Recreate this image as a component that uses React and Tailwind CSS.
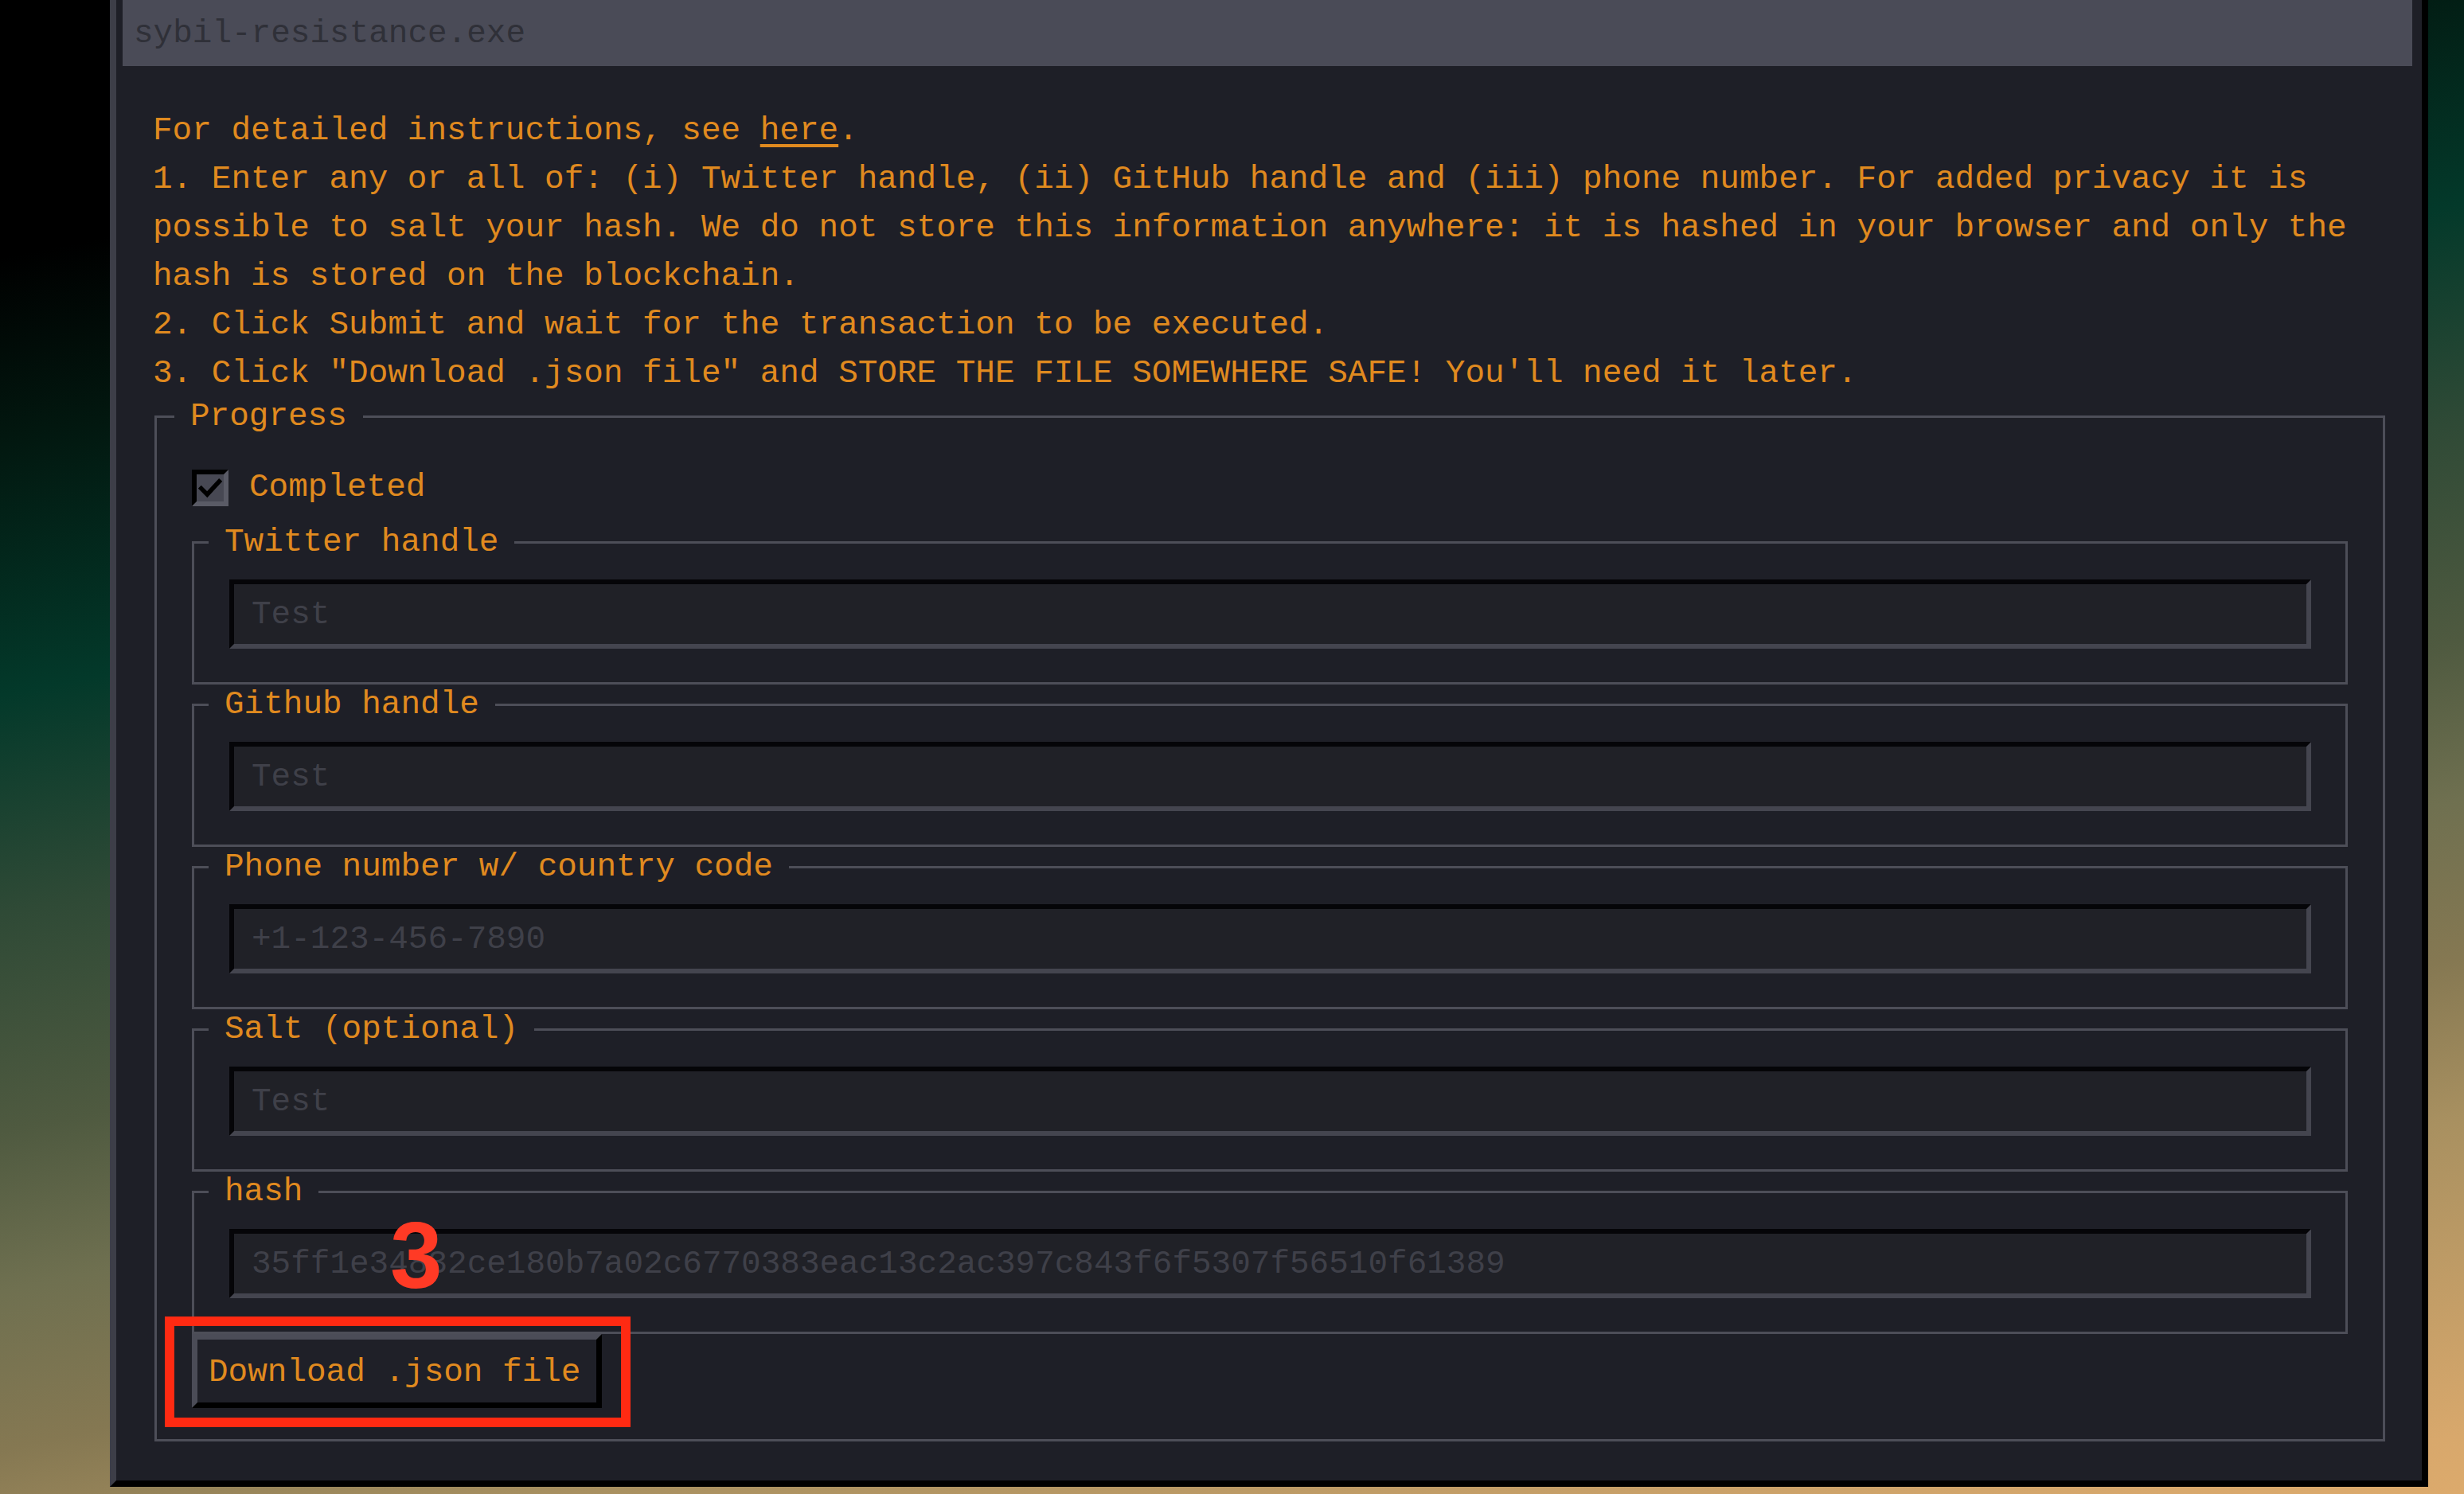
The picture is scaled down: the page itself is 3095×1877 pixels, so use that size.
import React from "react";

const fields = [
  { label: "Twitter handle", value: "Test" },
  { label: "Github handle", value: "Test" },
  { label: "Phone number w/ country code", value: "+1-123-456-7890" },
  { label: "Salt (optional)", value: "Test" },
  {
    label: "hash",
    value: "35ff1e34832ce180b7a02c6770383eac13c2ac397c843f6f5307f56510f61389",
    annotate: true,
  },
];

function Field({ label, value, annotate }) {
  return (
    <fieldset className="border-[3px] border-[#4d4e58] pl-[44px] pr-[43px] pt-[27px] pb-[42px]">
      <legend className="-ml-[26px] px-[20px] leading-[40px]">{label}</legend>
      <div className="relative">
        <input
          readOnly
          defaultValue={value}
          className="block h-[87px] w-full border-[6px] border-t-[#050508] border-l-[#050508] border-b-[#44454f] border-r-[#44454f] bg-[#202127] pl-[22px] text-[#3f4049] outline-none"
        />
        {annotate && (
          <span className="pointer-events-none absolute left-[202px] top-[-26px] font-['Liberation_Sans',Arial,sans-serif] text-[118px] font-bold leading-none text-[#ff3a25]">
            3
          </span>
        )}
      </div>
    </fieldset>
  );
}

export default function App() {
  return (
    <div className="h-[1877px] w-full overflow-hidden bg-[linear-gradient(168.7deg,#000_0%,#000_13%,#02170f_22%,#03392a_35%,#2f4a36_46%,#4f5a40_57%,#6f7050_65%,#857852_73%,#a89060_81%,#d8a86c_97%,#dcaa6c_100%)] pl-[138px] pr-[45px] pb-[9px] font-['Liberation_Mono',monospace] text-[41px]">
      <div className="flex h-full flex-col border-b-[8px] border-l-[8px] border-r-[8px] border-b-black border-l-[#3d3e48] border-r-black bg-[#1e1f27]">
        <div className="ml-[8px] mr-[12px] h-[83px] shrink-0 bg-[#4a4b57] pl-[14px] leading-[85px] text-[#2f3038]">
          sybil-resistance.exe
        </div>
        <div className="pl-[48px] pr-[46px] text-[#e08a1f]">
          <div className="-ml-[2px] mt-[51px] leading-[61px]">
            <p>
              For detailed instructions, see <a className="underline underline-offset-[6px]">here</a>.
            </p>
            <p>
              1. Enter any or all of: (i) Twitter handle, (ii) GitHub handle and (iii) phone number. For added
              privacy it is possible to salt your hash. We do not store this information anywhere: it is hashed in
              your browser and only the hash is stored on the blockchain.
            </p>
            <p>2. Click Submit and wait for the transaction to be executed.</p>
            <p>3. Click "Download .json file" and STORE THE FILE SOMEWHERE SAFE! You'll need it later.</p>
          </div>
          <fieldset className="mt-[3px] border-[3px] border-[#4d4e58] pl-[44px] pr-[44px] pt-[47px] pb-[39px]">
            <legend className="-ml-[22px] px-[20px] leading-[40px]">Progress</legend>
            <label className="flex h-[46px] items-center gap-[26px]">
              <span className="flex h-[46px] w-[46px] items-center justify-center border-[6px] border-t-black border-l-black border-b-[#5a5b66] border-r-[#5a5b66] bg-[#474853]">
                <svg viewBox="0 0 24 24" className="h-[30px] w-[30px]" fill="none">
                  <path d="M3 12.5 L9 18.5 L21 5.5" stroke="#000" strokeWidth="4.5" strokeLinecap="square" />
                </svg>
              </span>
              <span>Completed</span>
            </label>
            <div className="mt-[25px] flex flex-col gap-[5px]">
              {fields.map((f) => (
                <Field key={f.label} {...f} />
              ))}
            </div>
            <div className="relative inline-flex">
              <button className="flex h-[93px] items-center border-[7px] border-t-[#4b4c57] border-l-[#4b4c57] border-b-black border-r-black bg-[#1f2028] pl-[14px] pr-[20px] pt-[4px] text-[#e08a1f]">
                Download .json file
              </button>
              <span className="pointer-events-none absolute -left-[34px] -top-[22px] -right-[36px] -bottom-[24px] border-[12px] border-[#ff2a12]" />
            </div>
          </fieldset>
        </div>
      </div>
    </div>
  );
}
